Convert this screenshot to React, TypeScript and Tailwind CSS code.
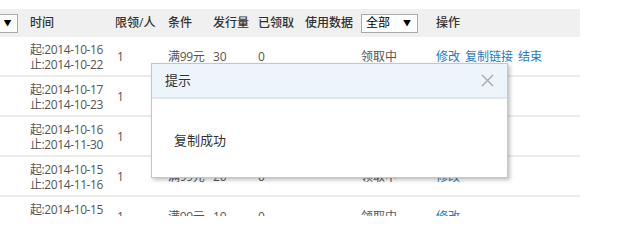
import * as React from "react";

type Row = {
    start: string;
    end: string;
    limit: string;
    cond: string;
    issued: string;
    taken: string;
    status: string;
    actions: string[];
};

const rows: Row[] = [
    { start: "2014-10-16", end: "2014-10-22", limit: "1", cond: "满99元", issued: "30", taken: "0", status: "领取中", actions: ["修改", "复制链接", "结束"] },
    { start: "2014-10-17", end: "2014-10-23", limit: "1", cond: "满99元", issued: "30", taken: "0", status: "领取中", actions: ["修改"] },
    { start: "2014-10-16", end: "2014-11-30", limit: "1", cond: "满99元", issued: "50", taken: "0", status: "领取中", actions: ["修改"] },
    { start: "2014-10-15", end: "2014-11-16", limit: "1", cond: "满99元", issued: "20", taken: "0", status: "领取中", actions: ["修改"] },
    { start: "2014-10-15", end: "2014-11-20", limit: "1", cond: "满99元", issued: "10", taken: "0", status: "领取中", actions: ["修改"] },
];

function Arrow() {
    return <span className="text-[8px] leading-none text-black">▼</span>;
}

export default function App() {
    return (
        <div className="relative w-[630px] h-[216px] overflow-hidden bg-white font-['Open_Sans','Noto_Sans_CJK_SC',sans-serif] text-[12px] text-[#555]">
            <div className="w-[580px] mt-[9px]">
                {/* header */}
                <div className="flex items-center h-[28px] bg-[#f0f0f0] text-[#333] font-medium">
                    <div className="w-[30px] flex">
                        <div className="w-[18px] h-[19px] bg-white border border-l-0 border-[#a9a9a9] flex items-center justify-center pr-[2px]">
                            <Arrow />
                        </div>
                    </div>
                    <div className="w-[85px]">时间</div>
                    <div className="w-[53px]">限领/人</div>
                    <div className="w-[45px]">条件</div>
                    <div className="w-[45px]">发行量</div>
                    <div className="w-[47px]">已领取</div>
                    <div className="w-[56px]">使用数据</div>
                    <div className="w-[75px]">
                        <div className="w-[57px] h-[19px] bg-white border border-[#a9a9a9] flex items-center justify-between pl-[4px] pr-[6px] font-normal text-black">
                            <span>全部</span>
                            <Arrow />
                        </div>
                    </div>
                    <div className="flex-1">操作</div>
                </div>

                {/* rows */}
                {rows.map((r, i) => (
                    <div key={i} className="flex items-center h-[40px] border-b-2 border-[#ebebeb] pt-[2px]">
                        <div className="w-[30px]" />
                        <div className="w-[85px] flex flex-col leading-[15px] tracking-[-0.4px]">
                            <span>起:{r.start}</span>
                            <span>止:{r.end}</span>
                        </div>
                        <div className="w-[53px] pl-[2px]">{r.limit}</div>
                        <div className="w-[45px] tracking-[-0.3px]">{r.cond}</div>
                        <div className="w-[45px]">{r.issued}</div>
                        <div className="w-[47px]">{r.taken}</div>
                        <div className="w-[56px]" />
                        <div className="w-[75px]">{r.status}</div>
                        <div className="flex-1 flex gap-[5px] text-[#2a77c4]">
                            {r.actions.map((a) => (
                                <span key={a}>{a}</span>
                            ))}
                        </div>
                    </div>
                ))}
            </div>

            {/* dialog */}
            <div className="absolute left-[151px] top-[63px] w-[357px] h-[115px] bg-white border border-[#c6c6c6] shadow-[2px_2px_4px_rgba(0,0,0,0.25)] flex flex-col">
                <div className="h-[35px] shrink-0 bg-[#eef4fc] border-b-2 border-[#e0e7ef] flex items-center justify-between pl-[13px] pr-[13px]">
                    <span className="text-[13px] text-[#333]">提示</span>
                    <svg width="13" height="13" viewBox="0 0 13 13" className="text-[#a8a8a8]">
                        <path d="M1 1 L12 12 M12 1 L1 12" stroke="currentColor" strokeWidth="1.4" fill="none" />
                    </svg>
                </div>
                <div className="pl-[22px] pt-[32px] text-[13px] text-[#333]">复制成功</div>
            </div>
        </div>
    );
}
